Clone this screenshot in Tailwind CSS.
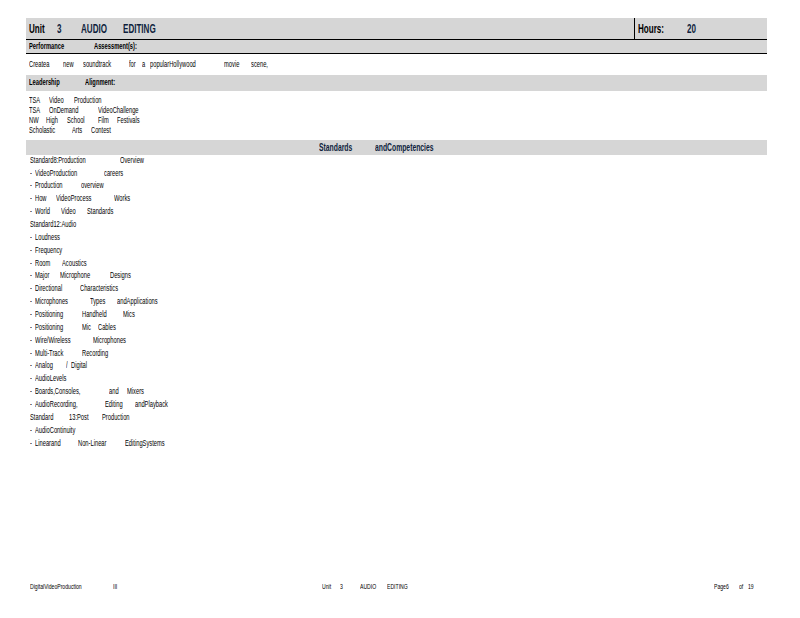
<!DOCTYPE html>
<html lang="en">
<head>
  <meta charset="UTF-8" />
  <title>Unit 3 Audio Editing</title>
  <script src="https://cdn.jsdelivr.net/npm/@tailwindcss/browser@4"></script>
</head>
<body class="bg-white">
  <div class="relative flex h-[618px] w-[800px] flex-col overflow-hidden bg-white pt-[18px] pr-[33px] pl-[26px] font-['Liberation_Sans',Arial,sans-serif] text-black">

    <!-- unit header -->
    <div class="flex h-[21px] items-center bg-[#d6d6d6] text-[13px] font-bold whitespace-nowrap [&_span]:origin-left [&_span]:scale-x-[0.62]">
      <span class="ml-[3px] w-[28px]">Unit</span>
      <span class="w-[24px] text-[#0f1f3d]">3</span>
      <span class="w-[42px] text-[#0f1f3d]">AUDIO</span>
      <span class="w-[511px] text-[#0f1f3d]">EDITING</span>
      <div class="flex h-full items-center border-l border-black pl-[3px]">
        <span class="w-[49px]">Hours:</span>
        <span class="text-[#0f1f3d]">20</span>
      </div>
    </div>

    <div class="flex h-[15px] items-center border-y border-black bg-[#d6d6d6] pl-[3px] text-[9px] font-bold whitespace-nowrap [&_span]:origin-left [&_span]:scale-x-[0.64]">
      <span class="w-[65px]">Performance</span>
      <span>Assessment(s):</span>
    </div>

    <div class="flex h-[21px] items-center pl-[3px] text-[9px] whitespace-nowrap [&_span]:origin-left [&_span]:scale-x-[0.64]">
      <span class="w-[34px]">Createa</span>
      <span class="w-[20px]">new</span>
      <span class="w-[46px]">soundtrack</span>
      <span class="w-[13px]">for</span>
      <span class="w-[8px]">a</span>
      <span class="w-[74px]">popularHollywood</span>
      <span class="w-[27px]">movie</span>
      <span>scene,</span>
    </div>

    <div class="flex h-[16px] items-center bg-[#d6d6d6] pl-[3px] text-[9px] font-bold whitespace-nowrap [&_span]:origin-left [&_span]:scale-x-[0.64]">
      <span class="w-[56px]">Leadership</span>
      <span>Alignment:</span>
    </div>

    <div class="flex flex-col pt-[5px] pb-[4px] pl-[3px] text-[9px] whitespace-nowrap [&_span]:origin-left [&_span]:scale-x-[0.64]">
      <div class="flex h-[10px] items-center"><span class="w-[20px]">TSA</span><span class="w-[25px]">Video</span><span>Production</span></div>
      <div class="flex h-[10px] items-center"><span class="w-[20px]">TSA</span><span class="w-[49px]">OnDemand</span><span>VideoChallenge</span></div>
      <div class="flex h-[10px] items-center"><span class="w-[17px]">NW</span><span class="w-[21px]">High</span><span class="w-[31px]">School</span><span class="w-[19px]">Film</span><span>Festivals</span></div>
      <div class="flex h-[10px] items-center"><span class="w-[43px]">Scholastic</span><span class="w-[19px]">Arts</span><span>Contest</span></div>
    </div>

    <div class="flex h-[15px] items-center bg-[#d6d6d6] pl-[293px] text-[10px] font-bold whitespace-nowrap text-[#0f1f3d] [&_span]:origin-left [&_span]:scale-x-[0.68]">
      <span class="w-[56px]">Standards</span>
      <span>andCompetencies</span>
    </div>

    <!-- standards list -->
    <div class="-mt-px flex flex-col pl-[4px] text-[9px] whitespace-nowrap [&_span]:origin-left [&_span]:scale-x-[0.64]">
      <div class="flex h-[12.86px] items-center"><span class="w-[90px]">Standard8:Production</span><span>Overview</span></div>
      <div class="flex h-[12.86px] items-center"><span class="w-[5px]">-</span><span class="w-[69px]">VideoProduction</span><span>careers</span></div>
      <div class="flex h-[12.86px] items-center"><span class="w-[5px]">-</span><span class="w-[46px]">Production</span><span>overview</span></div>
      <div class="flex h-[12.86px] items-center"><span class="w-[5px]">-</span><span class="w-[21px]">How</span><span class="w-[58px]">VideoProcess</span><span>Works</span></div>
      <div class="flex h-[12.86px] items-center"><span class="w-[5px]">-</span><span class="w-[26px]">World</span><span class="w-[26px]">Video</span><span>Standards</span></div>
      <div class="flex h-[12.86px] items-center"><span>Standard12:Audio</span></div>
      <div class="flex h-[12.86px] items-center"><span class="w-[5px]">-</span><span>Loudness</span></div>
      <div class="flex h-[12.86px] items-center"><span class="w-[5px]">-</span><span>Frequency</span></div>
      <div class="flex h-[12.86px] items-center"><span class="w-[5px]">-</span><span class="w-[27px]">Room</span><span>Acoustics</span></div>
      <div class="flex h-[12.86px] items-center"><span class="w-[5px]">-</span><span class="w-[25px]">Major</span><span class="w-[50px]">Microphone</span><span>Designs</span></div>
      <div class="flex h-[12.86px] items-center"><span class="w-[5px]">-</span><span class="w-[45px]">Directional</span><span>Characteristics</span></div>
      <div class="flex h-[12.86px] items-center"><span class="w-[5px]">-</span><span class="w-[55px]">Microphones</span><span class="w-[27px]">Types</span><span>andApplications</span></div>
      <div class="flex h-[12.86px] items-center"><span class="w-[5px]">-</span><span class="w-[47px]">Positioning</span><span class="w-[41px]">Handheld</span><span>Mics</span></div>
      <div class="flex h-[12.86px] items-center"><span class="w-[5px]">-</span><span class="w-[47px]">Positioning</span><span class="w-[16px]">Mic</span><span>Cables</span></div>
      <div class="flex h-[12.86px] items-center"><span class="w-[5px]">-</span><span class="w-[58px]">Wire/Wireless</span><span>Microphones</span></div>
      <div class="flex h-[12.86px] items-center"><span class="w-[5px]">-</span><span class="w-[47px]">Multi-Track</span><span>Recording</span></div>
      <div class="flex h-[12.86px] items-center"><span class="w-[5px]">-</span><span class="w-[31px]">Analog</span><span class="w-[5px]">/</span><span>Digital</span></div>
      <div class="flex h-[12.86px] items-center"><span class="w-[5px]">-</span><span>AudioLevels</span></div>
      <div class="flex h-[12.86px] items-center"><span class="w-[5px]">-</span><span class="w-[74px]">Boards,Consoles,</span><span class="w-[18px]">and</span><span>Mixers</span></div>
      <div class="flex h-[12.86px] items-center"><span class="w-[5px]">-</span><span class="w-[70px]">AudioRecording,</span><span class="w-[30px]">Editing</span><span>andPlayback</span></div>
      <div class="flex h-[12.86px] items-center"><span class="w-[39px]">Standard</span><span class="w-[33px]">13:Post</span><span>Production</span></div>
      <div class="flex h-[12.86px] items-center"><span class="w-[5px]">-</span><span>AudioContinuity</span></div>
      <div class="flex h-[12.86px] items-center"><span class="w-[5px]">-</span><span class="w-[43px]">Linearand</span><span class="w-[47px]">Non-Linear</span><span>EditingSystems</span></div>
    </div>

    <!-- footer -->
    <div class="mt-auto mb-[25px] flex h-[12px] items-center pl-[4px] text-[8px] whitespace-nowrap [&_span]:origin-left [&_span]:scale-x-[0.64]">
      <span class="w-[83px]">DigitalVideoProduction</span>
      <span class="w-[209px]">III</span>
      <span class="w-[18px]">Unit</span>
      <span class="w-[20px]">3</span>
      <span class="w-[27px]">AUDIO</span>
      <span class="w-[327px]">EDITING</span>
      <span class="w-[25px]">Page6</span>
      <span class="w-[9px]">of</span>
      <span>19</span>
    </div>
  </div>
</body>
</html>
